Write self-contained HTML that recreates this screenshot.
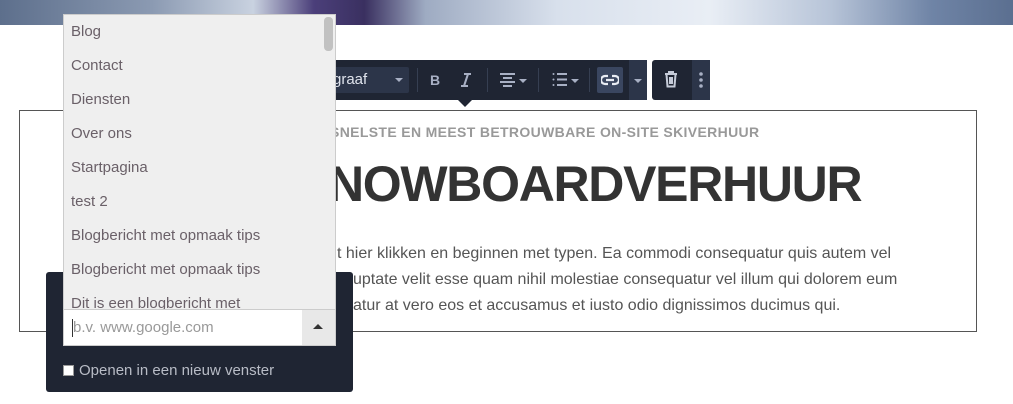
<!DOCTYPE html>
<html><head><meta charset="utf-8"><style>
*{box-sizing:border-box;margin:0;padding:0}
body{width:1013px;height:404px;overflow:hidden;background:#fff;font-family:"Liberation Sans",sans-serif;position:relative}
.banner{position:absolute;left:0;top:0;width:1013px;height:25px;background:linear-gradient(90deg,#5d6f8c 0%,#8b9ab2 15%,#c9d2e0 25%,#4b3f7a 31%,#3a3060 36%,#9eabc2 42%,#d8e0ec 55%,#e9eef5 70%,#b7c4d8 82%,#6f84a6 92%,#5b6f90 100%)}
.box{position:absolute;left:19px;top:110px;width:958px;height:222px;border:1px solid #555}
.sub{position:absolute;left:330px;top:124px;font-size:14px;font-weight:bold;color:#999;letter-spacing:0.35px}
.title{position:absolute;left:328px;top:155px;font-size:50px;font-weight:bold;color:#333;letter-spacing:-1.3px}
.ln{position:absolute;font-size:16px;color:#555;white-space:nowrap}
.tb{position:absolute;top:60px;height:40px;background:#1f2533;border-radius:3px}
.arrow{position:absolute;left:457px;top:99px;width:0;height:0;border-left:8px solid transparent;border-right:8px solid transparent;border-top:8px solid #1f2533}
.tb span{position:absolute;color:#a8b0c4;font-weight:bold}
.tri{position:absolute;border-left:4px solid transparent;border-right:4px solid transparent;border-top:4px solid #a8b0c4}
.sep{position:absolute;top:8px;width:1px;height:24px;background:#363f52}
.list{position:absolute;left:63px;top:14px;width:273px;height:296px;background:#efefef;border:1px solid #ccc;overflow:hidden}
.list div{height:34px;line-height:34px;padding-left:7px;font-size:15px;color:#6a6068}
.sb{position:absolute;right:2px;top:2px;width:9px;height:178px;background:#c1c1c1;border-radius:4px}
.pop{position:absolute;left:46px;top:272px;width:307px;height:120px;background:#1f2533;border-radius:3px}
.inp{position:absolute;left:63px;top:309px;width:273px;height:37px;background:#fff;border:1px solid #ccc}
.inp .ph{position:absolute;left:9px;top:9px;font-size:15px;color:#999}
.inp .btn{position:absolute;right:0;top:0;width:33px;height:35px;background:#e8e8e8}
</style></head><body>
<div class="banner"></div>
<div class="box"></div>
<div class="sub">SNELSTE EN MEEST BETROUWBARE ON-SITE SKIVERHUUR</div>
<div class="title">NOWBOARDVERHUUR</div>
<div class="ln" style="left:337px;top:245px">t hier klikken en beginnen met typen. Ea commodi consequatur quis autem vel</div>
<div class="ln" style="left:353px;top:271px">uptate velit esse quam nihil molestiae consequatur vel illum qui dolorem eum</div>
<div class="ln" style="left:353px;top:297px">atur at vero eos et accusamus et iusto odio dignissimos ducimus qui.</div>
<div class="tb" style="left:300px;width:347px">
 <div style="position:absolute;left:0;top:7px;width:109px;height:26px;background:#2c3549;border-radius:2px"></div>
 <span style="left:33px;top:11px;font-weight:normal;color:#dfe3ec;font-size:15px">graaf</span>
 <div class="tri" style="left:95px;top:18px"></div>
 <div class="sep" style="left:117px"></div>
 <span style="left:130px;top:12px;font-size:14px">B</span>
 <svg style="position:absolute;left:160px;top:13px" width="12" height="14" viewBox="0 0 12 14" fill="none" stroke="#a8b0c4" stroke-width="2"><path d="M4 1h7M1 13h7M8 1L4 13"/></svg>
 <div class="sep" style="left:187px"></div>
 <svg style="position:absolute;left:200px;top:12px" width="15" height="15" viewBox="0 0 15 15" fill="none" stroke="#a8b0c4" stroke-width="2"><path d="M0 2h15M3 6h9M0 10h15M3 14h9"/></svg>
 <div class="tri" style="left:219px;top:19px"></div>
 <div class="sep" style="left:238px"></div>
 <svg style="position:absolute;left:252px;top:12px" width="15" height="15" viewBox="0 0 15 15" fill="#a8b0c4" stroke="#a8b0c4" stroke-width="2"><circle cx="1.5" cy="2" r="1" stroke="none"/><circle cx="1.5" cy="7.5" r="1" stroke="none"/><circle cx="1.5" cy="13" r="1" stroke="none"/><path d="M5 2h10M5 7.5h10M5 13h10"/></svg>
 <div class="tri" style="left:271px;top:19px"></div>
 <div class="sep" style="left:289px"></div>
 <div style="position:absolute;left:297px;top:7px;width:26px;height:26px;background:#3a4660;border-radius:2px"></div>
 <svg style="position:absolute;left:301px;top:14px" width="18" height="12" viewBox="0 0 18 12" fill="none" stroke="#e8ecf4" stroke-width="2.2"><path d="M7 2H4a4 4 0 000 8h3M11 2h3a4 4 0 010 8h-3M5 6h8"/></svg>
 <div style="position:absolute;left:329px;top:0;width:18px;height:40px;background:#2c3549"></div>
 <div class="tri" style="left:334px;top:19px"></div>
</div>
<div class="arrow"></div>
<div class="tb" style="left:652px;width:58px">
 <svg style="position:absolute;left:12px;top:11px" width="14" height="17" viewBox="0 0 14 17" fill="none" stroke="#c5cbd8" stroke-width="2"><path d="M1 3h12M5 3V1h4v2M2.5 3.5l1 12h7l1-12M6 6v7M8 6v7"/></svg>
 <div style="position:absolute;left:40px;top:0;width:18px;height:40px;background:#2c3549"></div>
 <svg style="position:absolute;left:47px;top:12px" width="4" height="16" viewBox="0 0 4 16" fill="#a8b0c4"><circle cx="2" cy="2" r="1.8"/><circle cx="2" cy="8" r="1.8"/><circle cx="2" cy="14" r="1.8"/></svg>
</div>
<div class="pop">
 <div style="position:absolute;left:17px;top:93px;width:11px;height:11px;background:#fff;border:1px solid #999"></div>
 <div style="position:absolute;left:33px;top:90px;font-size:15px;color:#b8bcc6">Openen in een nieuw venster</div>
</div>
<div class="list">
 <div>Blog</div><div>Contact</div><div>Diensten</div><div>Over ons</div><div>Startpagina</div><div>test 2</div><div>Blogbericht met opmaak tips</div><div>Blogbericht met opmaak tips</div><div>Dit is een blogbericht met</div>
 <div class="sb"></div>
</div>
<div class="inp"><div style="position:absolute;left:8px;top:9px;width:1px;height:18px;background:#333"></div><div class="ph">b.v. www.google.com</div><div class="btn"><div style="position:absolute;left:11px;top:14px;border-left:5px solid transparent;border-right:5px solid transparent;border-bottom:5px solid #333"></div></div></div>
</body></html>
